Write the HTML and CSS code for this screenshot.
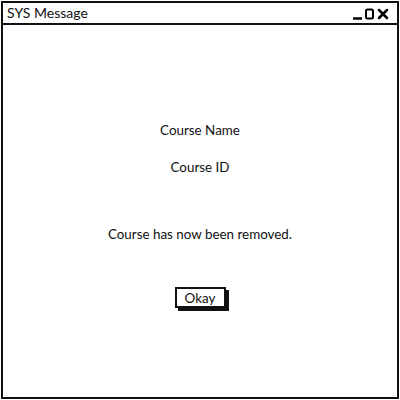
FILE: index.html
```html
<!DOCTYPE html>
<html>
<head>
<meta charset="utf-8">
<link rel="stylesheet" href="styles.css">
</head>
<body>
<div class="window">
  <div class="titlebar">
    <span class="title">SYS Message</span>
    <div class="controls">
      <svg width="40" height="12" viewBox="0 0 40 12">
        <path d="M1 10.5 H10" stroke="#000" stroke-width="2.5" fill="none"/>
        <rect x="14" y="1.5" width="7" height="9" rx="1.5" stroke="#000" stroke-width="2" fill="none"/>
        <path d="M27 2 L35 10 M35 2 L27 10" stroke="#000" stroke-width="2.5" fill="none" stroke-linecap="round"/>
      </svg>
    </div>
  </div>
  <div class="content">
    <p class="line first">Course Name</p>
    <p class="line second">Course ID</p>
    <p class="line third">Course has now been removed.</p>
    <button class="okay">Okay</button>
  </div>
</div>
</body>
</html>
```
FILE: styles.css
```css
html, body {
  margin: 0;
  padding: 0;
  background: #fff;
}
body {
  font-family: Lato, "Noto Sans", sans-serif;
  color: #111;
}
.window {
  margin: 1px;
  width: 398px;
  height: 398px;
  box-sizing: border-box;
  border: 2px solid #111;
  display: flex;
  flex-direction: column;
}
.titlebar {
  height: 20px;
  border-bottom: 2px solid #111;
  display: flex;
  align-items: center;
  justify-content: space-between;
  padding: 0 5px 0 4px;
}
.title {
  font-size: 14px;
  line-height: 20px;
}
.controls {
  display: flex;
  align-items: center;
  padding-top: 1px;
}
.content {
  flex: 1;
  display: flex;
  flex-direction: column;
  align-items: center;
  padding-top: 97px;
}
.line {
  margin: 0;
  font-size: 13.4px;
  line-height: 16px;
}
.second {
  margin-top: 21px;
}
.third {
  margin-top: 51px;
}
.okay {
  margin-top: 45px;
  font-family: inherit;
  font-size: 13.4px;
  color: #111;
  background: #fff;
  border: 2px solid #111;
  border-radius: 0;
  padding: 0 8px;
  height: 21px;
  width: 51px;
  box-shadow: 3px 3px 0 #111;
}
```
